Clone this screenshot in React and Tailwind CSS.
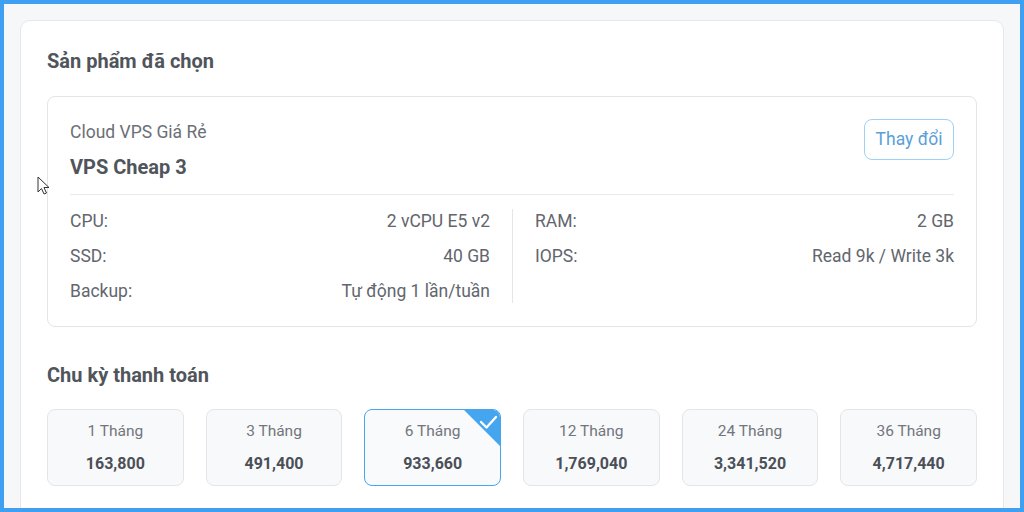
import React from "react";

const specsLeft = [
  ["CPU:", "2 vCPU E5 v2"],
  ["SSD:", "40 GB"],
  ["Backup:", "Tự động 1 lần/tuần"],
];
const specsRight = [
  ["RAM:", "2 GB"],
  ["IOPS:", "Read 9k / Write 3k"],
];
const cycles = [
  ["1 Tháng", "163,800"],
  ["3 Tháng", "491,400"],
  ["6 Tháng", "933,660", true],
  ["12 Tháng", "1,769,040"],
  ["24 Tháng", "3,341,520"],
  ["36 Tháng", "4,717,440"],
];

function SpecCol({ rows }) {
  return (
    <div className="flex flex-col gap-[11px]">
      {rows.map(([k, v]) => (
        <div key={k} className="flex justify-between text-[17.5px] leading-[24px] text-[#62666d]">
          <span>{k}</span>
          <span>{v}</span>
        </div>
      ))}
    </div>
  );
}

export default function App() {
  return (
    <div
      className="relative h-[512px] w-[1024px] overflow-hidden border-4 border-[#3f9ff0] bg-[#f6f7f9] p-4"
      style={{ fontFamily: "Roboto, 'Noto Sans', sans-serif" }}
    >
      <div className="h-[600px] rounded-[10px] border border-[#e5e7ea] bg-white px-[26px] pt-[26px]">
        <h2 className="text-[20px] font-bold leading-[28px] text-[#50545b]">Sản phẩm đã chọn</h2>

        <div className="mt-[21px] rounded-[8px] border border-[#e3e5e8] px-[22px] pb-[23px] pt-[23px]">
          <div className="flex items-start justify-between border-b border-[#e8e9ec] pb-[13px]">
            <div>
              <div className="text-[17.5px] leading-[24px] text-[#6b6f76]">Cloud VPS Giá Rẻ</div>
              <div className="mt-[9px] text-[20px] font-bold leading-[28px] text-[#50545b]">VPS Cheap 3</div>
            </div>
            <button className="-mt-[1px] h-[41px] w-[90px] rounded-[8px] border border-[#9fd0f5] text-[17.5px] text-[#5a9fd8]">
              Thay đổi
            </button>
          </div>
          <div className="mt-[14px] grid grid-cols-2">
            <div className="pr-[22px]">
              <SpecCol rows={specsLeft} />
            </div>
            <div className="border-l border-[#e3e5e8] pl-[22px]">
              <SpecCol rows={specsRight} />
            </div>
          </div>
        </div>

        <h2 className="mt-[34px] text-[20px] font-bold leading-[28px] text-[#50545b]">Chu kỳ thanh toán</h2>

        <div className="mt-[20px] grid grid-cols-6 gap-[22px]">
          {cycles.map(([m, p, sel]) => (
            <div
              key={m}
              className={
                "relative flex h-[77px] flex-col items-center overflow-hidden rounded-[8px] border pt-[10px] " +
                (sel ? "border-[#4aa6ec] bg-[#f9fafc]" : "border-[#e3e5e8] bg-[#f8f9fb]")
              }
            >
              <div className="text-[15.5px] leading-[22px] text-[#72767c]">{m}</div>
              <div className="mt-[11px] text-[16px] font-bold leading-[22px] text-[#4b4f56]">{p}</div>
              {sel && (
                <svg className="absolute right-0 top-0" width="36" height="36" viewBox="0 0 36 36">
                  <polygon points="0,0 36,0 36,36" fill="#45a5ef" />
                  <path d="M17 12 L22.5 17.5 L32 7" fill="none" stroke="#fff" strokeWidth="2.4" strokeLinecap="round" strokeLinejoin="round" />
                </svg>
              )}
            </div>
          ))}
        </div>
      </div>

      <svg className="absolute left-[33px] top-[172px]" width="14" height="20" viewBox="0 0 14 20">
        <path d="M1 1 L1 16 L4.5 12.5 L7 18 L9.5 17 L7 11.5 L12 11.5 Z" fill="#fff" stroke="#333" strokeWidth="1" strokeLinejoin="round" />
      </svg>
    </div>
  );
}
